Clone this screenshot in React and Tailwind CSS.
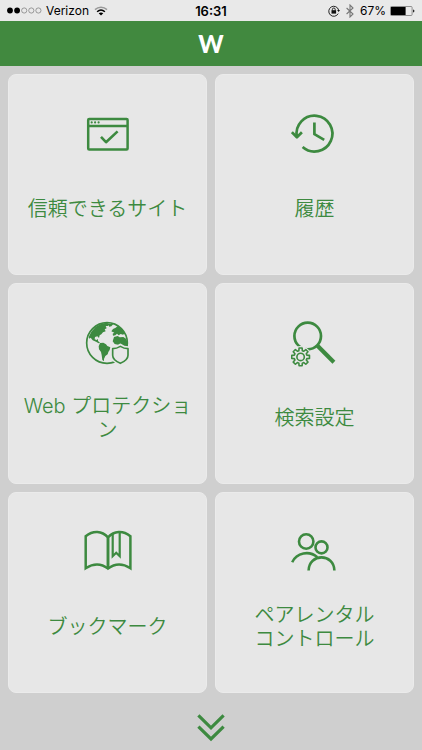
import React from 'react';

const GREEN = '#3d8a40';
const CARD = '#e7e7e7';

// Outline of a cog with eight teeth around (cx, cy)
const gearPoints = (cx, cy, inner, outer) => {
  const points = [];
  for (let i = 0; i < 8; i++) {
    const base = (i * Math.PI) / 4;
    [[-0.27, inner], [-0.17, outer], [0.17, outer], [0.27, inner]].forEach(([a, r]) => {
      points.push(`${(cx + r * Math.sin(base + a)).toFixed(2)},${(cy - r * Math.cos(base + a)).toFixed(2)}`);
    });
  }
  return points.join(' ');
};

const Icon = ({ children, viewBox = '0 0 48 48', strokeWidth = 2.5 }) => (
  <svg
    className="w-12 h-12"
    viewBox={viewBox}
    fill="none"
    stroke={GREEN}
    strokeWidth={strokeWidth}
    strokeLinejoin="round"
    aria-hidden="true"
  >
    {children}
  </svg>
);

const TrustedSitesIcon = () => (
  <Icon>
    <rect x="4.2" y="9" width="39.4" height="30.4" rx="1" />
    <path d="M4.2 15.9H43.6" />
    <g fill={GREEN} stroke="none">
      <circle cx="7.7" cy="12.4" r="1.1" />
      <circle cx="11.1" cy="12.4" r="1.1" />
      <circle cx="14.6" cy="12.4" r="1.1" />
    </g>
    <path d="M17 26.8L22 32.2L33.6 21.4" strokeWidth="2.6" />
  </Icon>
);

const HistoryIcon = () => (
  <Icon strokeWidth={2.7}>
    <path d="M11.6 37A17.9 17.9 0 1 0 5.9 27" />
    <path d="M0.9 22.2L5.9 27.2L10.9 22.2" />
    <path d="M23.4 12.5V24.2L33.2 29.8" />
  </Icon>
);

const WebProtectionIcon = () => (
  <Icon viewBox="26 20 144 144" strokeWidth={5}>
    <circle cx="95" cy="92" r="61" />
    <g fill={GREEN} stroke="none">
      <path d="M40 74L48 58L61 43L78 34L94 31L104 36L98 41L91 41L94 48L88 51L91 57L83 60L78 66L73 69L71 77L66 72L59 74L58 81L64 83L68 80L68 86L74 91L70 93L62 88L52 84L46 76L42 79Z" />
      <path d="M74 92L84 91L92 96L96 101L105 105L103 113L99 119L97 126L90 131L86 140L86 147L81 143L79 128L77 119L71 111L70 102Z" />
      <path d="M101 34L114 35L108 42L101 43Z" />
      <path d="M108 57L113 50L121 46L127 41L140 51L149 63L143 67L136 65L130 69L125 64L120 69L113 70L112 64L117 61Z" />
      <path d="M116 74L127 71L133 75L144 74L152 79L157 91L157 108L130 108L128 97L118 95L112 87Z" />
    </g>
    <path
      d="M135 99C127 106 119 107 111 107V129C111 143 122 150 135 155C148 150 159 143 159 129V107C151 107 143 106 135 99Z"
      fill={CARD}
      stroke={CARD}
      strokeWidth="10"
    />
    <path
      d="M135 102C127 107 120 109 112 109V129C112 141 123 148 135 153C147 148 158 141 158 129V109C150 109 143 107 135 102Z"
      fill={CARD}
      strokeWidth="5"
    />
  </Icon>
);

const SearchSettingsIcon = () => (
  <Icon>
    <circle cx="16.7" cy="17" r="13.3" strokeWidth="2.7" />
    <path d="M26 26.3L42.9 43.2" strokeWidth="4.2" />
    <circle cx="9.6" cy="37.7" r="10.6" fill={CARD} stroke="none" />
    <polygon points={gearPoints(9.6, 37.9, 6.5, 9)} strokeWidth="1.6" />
    <circle cx="9.6" cy="37.9" r="3.7" strokeWidth="1.6" />
  </Icon>
);

const BookmarkIcon = () => (
  <Icon>
    <g strokeLinejoin="miter">
      <path d="M24 9.4C17.8 2.8 9.3 2.2 1.7 8.2V40.2C9.3 35.4 17.3 35.4 24 40.6C30.8 35.4 38.8 35.4 46.4 40.2V8.2C38.8 2.2 30.2 2.8 24 9.4Z" />
      <path d="M24 9.4V40.4" strokeWidth="2.9" />
      <path d="M28.7 5.6V28.2L32.2 24.8L35.7 28.2V4.6" strokeWidth="2.2" />
    </g>
  </Icon>
);

const ParentalIcon = () => (
  <Icon strokeWidth={2.6}>
    <circle cx="15.2" cy="13.5" r="7.2" />
    <circle cx="30.5" cy="19.4" r="6" />
    <path d="M1.2 34.2C5.7 24.6 18.2 22.2 26.3 29.2" />
    <path d="M17.6 42.6C17.9 25 43.1 25 43.4 42.6" />
  </Icon>
);

const tiles = [
  { id: 'trusted', icon: TrustedSitesIcon, lines: ['信頼できるサイト'] },
  { id: 'history', icon: HistoryIcon, lines: ['履歴'] },
  { id: 'protection', icon: WebProtectionIcon, lines: ['Web プロテクション'] },
  { id: 'search', icon: SearchSettingsIcon, lines: ['検索設定'] },
  { id: 'bookmarks', icon: BookmarkIcon, lines: ['ブックマーク'] },
  { id: 'parental', icon: ParentalIcon, lines: ['ペアレンタル', 'コントロール'] },
];

const Tile = ({ icon: TileIcon, lines }) => (
  <button
    type="button"
    className="flex h-[201px] flex-col items-center rounded-lg border border-[#ebebeb] bg-[#e7e7e7] px-2 pt-[35px]"
  >
    <TileIcon />
    <span className="flex h-[102px] w-full items-center justify-center text-center text-xl leading-6 font-[350] text-[#3d8a40]">
      <span>
        {lines.map((line) => (
          <span key={line} className="block">{line}</span>
        ))}
      </span>
    </span>
  </button>
);

const StatusBar = () => (
  <div className="grid h-[21px] grid-cols-3 items-center bg-[#e9e9e9] px-[7px] text-xs leading-5 text-black">
    <div className="flex items-center gap-1">
      <svg className="h-[7px] w-[35px]" viewBox="0 0 35 7" aria-hidden="true">
        <circle cx="3" cy="3.5" r="2.9" />
        <circle cx="10.1" cy="3.5" r="2.9" />
        <g fill="none" stroke="#777" strokeWidth="0.7">
          <circle cx="17.2" cy="3.5" r="2.6" />
          <circle cx="24.3" cy="3.5" r="2.6" />
          <circle cx="31.4" cy="3.5" r="2.6" />
        </g>
      </svg>
      <span>Verizon</span>
      <svg className="ml-px h-[10px] w-[14px]" viewBox="0 0 14 10" fill="none" strokeWidth="1.5" aria-hidden="true">
        <path d="M1 3.6C4.4 0.4 9.6 0.4 13 3.6" stroke="#999" />
        <path d="M3.1 5.8C5.4 3.7 8.6 3.7 10.9 5.8" stroke="#000" />
        <path d="M4.7 7.3C6 6.1 8 6.1 9.3 7.3L7 9.6Z" fill="#000" />
      </svg>
    </div>
    <div className="text-center text-[13px] font-semibold">16:31</div>
    <div className="flex items-center justify-end gap-1">
      <svg className="h-3 w-3" viewBox="0 0 12 12" fill="none" stroke="#111" aria-hidden="true">
        <path d="M10.2 8.6A5 5 0 1 1 10.6 5" strokeWidth="0.9" />
        <path d="M9.1 5H12L10.6 7Z" fill="#111" stroke="none" />
        <rect x="3.5" y="5.2" width="4.6" height="3.4" fill="#111" stroke="none" />
        <path d="M4.4 5.4V4.4A1.4 1.4 0 0 1 7.2 4.4V5.4" strokeWidth="0.9" />
      </svg>
      <svg className="mx-0.5 h-[14px] w-2" viewBox="0 0 8 14" fill="none" stroke="#777" strokeWidth="1.1" aria-hidden="true">
        <path d="M0.6 4L7 10L4 13V1L7 4L0.6 10" />
      </svg>
      <span>67%</span>
      <svg className="h-[10px] w-[25px]" viewBox="0 0 25 10" aria-hidden="true">
        <rect x="0.5" y="0.5" width="21.6" height="9" rx="1" fill="none" stroke="#777" strokeWidth="0.8" />
        <rect x="1" y="1" width="14.6" height="8" />
        <path d="M23.2 3.4C24.8 3.8 24.8 6.2 23.2 6.6Z" />
      </svg>
    </div>
  </div>
);

const App = () => {
  return (
    <div className="min-h-screen bg-[#cfcfcf] font-['Inter','Noto_Sans_CJK_JP',sans-serif]">
      <StatusBar />
      <header className="flex h-[45px] items-center justify-center bg-[#41893f]">
        <h1 className="font-['Lato',sans-serif] text-2xl leading-6 font-black text-white">W</h1>
      </header>

      <main className="grid grid-cols-2 gap-2 p-2">
        {tiles.map((tile) => (
          <Tile key={tile.id} icon={tile.icon} lines={tile.lines} />
        ))}
      </main>

      <div className="flex justify-center pt-3 pb-2">
        <button type="button" aria-label="次へ">
          <svg className="h-[30px] w-[30px]" viewBox="0 0 30 30" fill="none" stroke={GREEN} strokeWidth="3.2" aria-hidden="true">
            <path d="M2.4 2.4L15 14.8L27.6 2.4" />
            <path d="M2.4 13.6L15 26L27.6 13.6" />
          </svg>
        </button>
      </div>
    </div>
  );
};

export default App;
